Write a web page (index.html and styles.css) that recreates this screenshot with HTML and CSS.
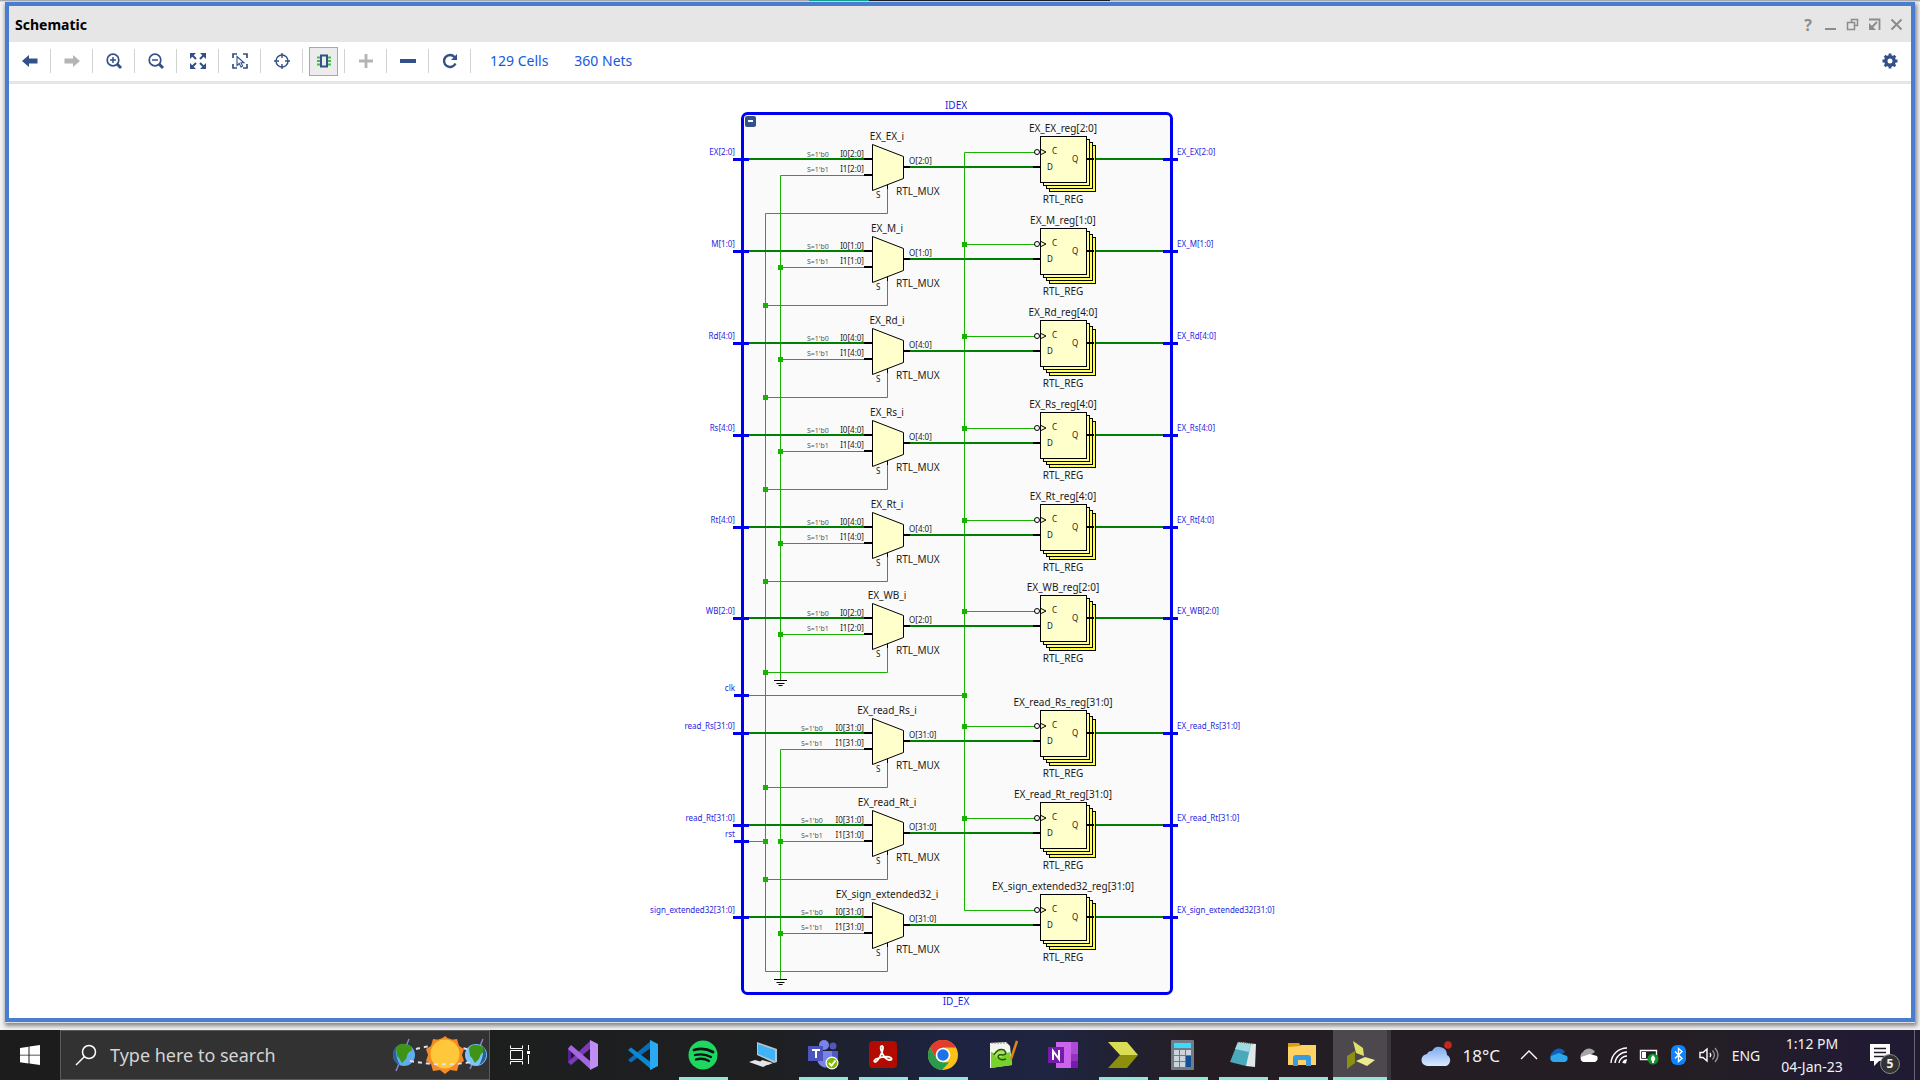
FILE: index.html
```html
<!DOCTYPE html>
<html lang="en">
<head>
<meta charset="utf-8">
<title>Schematic</title>
<link rel="stylesheet" href="styles.css">
</head>
<body>
<div class="edge"><span class="edge-teal"></span><span class="edge-dark"></span></div>

<main class="window">
  <header class="titlebar">
    <h1 class="title">Schematic</h1>
    <div class="controls">
      <button class="control" aria-label="Help">?</button>
      <button class="control" aria-label="Minimize"><svg width="13" height="13"><path d="M1 11h11" stroke-width="2"/></svg></button>
      <button class="control" aria-label="Restore"><svg width="13" height="13"><path d="M5.500 4V1.500h6v6H9M1.500 4.500h7v7h-7z" stroke-width="1.500"/></svg></button>
      <button class="control" aria-label="Float"><svg width="13" height="13"><path d="M1 1.500h10.500V12M9 4L4 9" stroke-width="1.800"/><path d="M1 5v7h7z" class="fill"/></svg></button>
      <button class="control" aria-label="Close"><svg width="13" height="13"><path d="M1.500 1.500l10 10M11.500 1.500l-10 10" stroke-width="2"/></svg></button>
    </div>
  </header>

  <nav class="toolbar">
    <button class="tool" aria-label="Previous"><svg width="20" height="20"><path class="fill" d="M2 10l7-6v3.500h8.500v5H9V16z"/></svg></button>
    <button class="tool off" aria-label="Next"><svg width="20" height="20"><path class="fill" d="M18 10l-7-6v3.500H2.500v5H11V16z"/></svg></button>
    <button class="tool" aria-label="Zoom in"><svg width="20" height="20"><circle cx="9" cy="9" r="5.800" stroke-width="1.700"/><path d="M6 9h6M9 6v6" stroke-width="1.500"/><path d="M13 13l4 4" stroke-width="3"/></svg></button>
    <button class="tool" aria-label="Zoom out"><svg width="20" height="20"><circle cx="9" cy="9" r="5.800" stroke-width="1.700"/><path d="M6 9h6" stroke-width="1.500"/><path d="M13 13l4 4" stroke-width="3"/></svg></button>
    <button class="tool" aria-label="Zoom fit"><svg width="20" height="20"><path class="fill" d="M2 2h6L2 8zM18 2v6l-6-6zM2 18v-6l6 6zM18 18h-6l6-6z"/><path d="M4 4l4 4M16 4l-4 4M4 16l4-4M16 16l-4-4" stroke-width="2"/></svg></button>
    <button class="tool" aria-label="Select area"><svg width="20" height="20"><path d="M3 7V3h4M13 3h4v4M3 13v4h4M17 13v4h-4" stroke-width="1.700"/><path d="M7 5.500v9l2.200-2 1.800 3.500 1.700-1-1.700-3.200h3z" stroke-width="1.100"/></svg></button>
    <button class="tool" aria-label="Auto-fit selection"><svg width="20" height="20"><circle cx="10" cy="10" r="6" stroke-width="1.400"/><path d="M10 2v5M10 13v5M2 10h5M13 10h5" stroke-width="1.400"/></svg></button>
    <button class="tool" aria-label="Cell pins" aria-pressed="true"><span class="pressed"><svg width="20" height="20"><path d="M3 6.500h14M3 10h14M3 13.500h14" class="pins"/><path d="M7 4.500h6v11H7z" class="cell"/></svg></span></button>
    <button class="tool off" aria-label="Expand"><svg width="20" height="20"><path d="M10 3v14M3 10h14" stroke-width="2.800"/></svg></button>
    <button class="tool" aria-label="Collapse"><svg width="20" height="20"><path class="fill" d="M2 8h16v4H2z"/></svg></button>
    <button class="tool" aria-label="Reload"><svg width="20" height="20"><path d="M15.500 12.500a6 6 0 1 1-1-6.500" stroke-width="2.400"/><path class="fill" d="M17 3v6h-6z"/></svg></button>
    <a class="stat" href="#cells">129 Cells</a>
    <a class="stat" href="#nets">360 Nets</a>
    <button class="settings" aria-label="Settings"><svg width="18" height="18"><circle cx="9" cy="9" r="4.200" stroke-width="3.400"/><path stroke-width="2.800" d="M9 1.500v3M9 13.500v3M1.500 9h3M13.500 9h3M3.700 3.700l2 2M12.300 12.300l2 2M3.700 14.300l2-2M12.300 5.700l2-2"/></svg></button>
  </nav>

  <section class="canvas">
    <svg id="schematic" class="schematic" viewBox="600 84 720 934" width="720" height="934">
      <defs>
        <g id="cell-row">
          <path class="bus" d="M749 159H865M910 167H1033M1094 159H1164"/>
          <path class="net" d="M780.500 175.500H865M887.500 188V213.500H765.500M964.500 152.500H1035"/>
          <path class="pin" d="M864 159h8M864 175h8M904 167h6M1033 167h7"/>
          <path class="lead" d="M887.500 184v5"/>
          <path class="part" d="M872.500 144.500L903.500 156.500V178.500L872.500 190.500z"/>
          <path class="port" d="M733 159.500h16M1163 159.500h15"/>
          <rect class="part s4" x="1049.500" y="145.500" width="46" height="46"/>
          <rect class="part s3" x="1046.500" y="142.500" width="46" height="46"/>
          <rect class="part s2" x="1043.500" y="139.500" width="46" height="46"/>
          <rect class="part" x="1040.500" y="136.500" width="46" height="46"/>
          <path class="pin" d="M1087 159h7"/>
          <circle class="lead" cx="1037" cy="152" r="2.500"/>
          <path class="lead" d="M1041 149.500l5 2.500-5 2.500"/>
        </g>
        <path id="ground" class="lead" d="M-6.500 0H6.500M-4 3H4M-2 5H2"/>
      </defs>
      <rect class="module" x="742.500" y="113.500" width="429" height="880" rx="5"/>
      <rect class="toggle" x="745" y="116" width="11" height="11" rx="2"/>
      <path class="toggle-mark" d="M748 121h5"/>
      <text class="blue mid" x="956" y="109">IDEX</text>
      <text class="blue mid" x="956" y="1005">ID_EX</text>
    </svg>
  </section>
</main>

<footer class="taskbar">
  <button class="start" aria-label="Start"><svg width="20" height="20"><path fill="#fff" d="M0 3l8.500-1.300v8H0zM9.500 1.500L20 0v9.700H9.500zM0 10.500h8.500v8L0 17.200zM9.500 10.500H20V20L9.500 18.600z"/></svg></button>
  <label class="search">
    <svg width="22" height="22"><g fill="none" stroke="#fff" stroke-width="1.500"><circle cx="14" cy="8" r="6.500"/><path d="M9.500 12.500L1 21"/></g></svg>
    <input class="search-box" type="text" placeholder="Type here to search" aria-label="Search">
    <svg class="doodle" width="96" height="40" viewBox="0 0 96 40">
      <path d="M17 4L4 36M91 4L78 34" stroke="#8b83c4" stroke-width="1.500"/>
      <path d="M24 14Q50 7 78 15" class="orbit"/>
      <g fill="#f78a22"><circle cx="53" cy="19" r="16"/><path d="M53 1l5 4 7-1 2 7 5 3-2 6 2 6-5 3-2 7-7-1-5 4-5-4-7 1-2-7-5-3 2-6-2-6 5-3 2-7 7 1z"/></g>
      <circle cx="53" cy="19" r="14.500" fill="#ffc83b"/>
      <circle cx="12" cy="20" r="11" fill="#5eaef0"/><path d="M4 13q3-5 9-4l6 2 1 4-4 3-2 6-4 4-3-5-2-2z" fill="#3f9315"/><path d="M4 12a11 11 0 0 0 4 18q-5-8-4-18z" fill="#2b6096"/>
      <circle cx="84" cy="20" r="11" fill="#7cc4fb"/><path d="M77 13q3-4 9-3l6 2 1 4-4 3-2 5-4 4-3-5-2-2z" fill="#3f9315"/><path d="M91 12a11 11 0 0 1-4 18q5-8 4-18z" fill="#2b6096"/>
      <path d="M18 26Q50 32 80 27" class="orbit"/>
    </svg>
  </label>
  <button class="view" aria-label="Task view"><svg width="20" height="20"><path fill="none" stroke="#fff" d="M.5.500V3.500h12V.500M.500 5.500h12v9H.500zM.500 19.500v-3h12v3M18.500 0v5M18.500 10v9"/><path fill="#fff" d="M17 6h3v3h-3z"/></svg></button>
  <nav class="apps">
    <button class="app" aria-label="Visual Studio"><svg width="30" height="30"><path fill="#55208f" d="M0 8l3-3v20l-3-3z"/><path fill="#7a3bb8" d="M0 22l3 3 20-17V0z"/><path fill="#a566e2" d="M3 5l19 16v8L0 9z"/><path fill="#c08df5" d="M22 0l8 4v22l-8 4z"/></svg></button>
    <button class="app" aria-label="Visual Studio Code"><svg width="30" height="30"><path fill="#0b6cb5" d="M0 20l3 2.500L24 7V0z"/><path fill="#0a88d2" d="M0 10l3-2.500L24 23v7z"/><path fill="#2aaaf4" d="M22 0l8 4v22l-8 4z"/></svg></button>
    <button class="app open" aria-label="Spotify"><svg width="30" height="30"><circle cx="15" cy="15" r="14.500" fill="#1ed760"/><path fill="none" stroke="#111" stroke-linecap="round" stroke-width="2.800" d="M6 10q10-3 19 2"/><path fill="none" stroke="#111" stroke-linecap="round" stroke-width="2.300" d="M7 15q9-2 16 2M8 19.500q7-2 13 1.500"/></svg></button>
    <button class="app" aria-label="Remote desktop"><svg width="30" height="30"><path fill="#b9c4cc" d="M9 2l20 7v13l-3 1L9 15z"/><path fill="#3fb2f8" d="M10 4l17 6v11L10 14z"/><path fill="#e2e6e9" d="M14 20l11 3-5 2-8-3zM1 22l6-2 14 4-6 3z"/></svg></button>
    <button class="app open" aria-label="Teams"><svg width="32" height="32"><circle cx="17" cy="6" r="5" fill="#7b83eb"/><circle cx="26" cy="7" r="3.500" fill="#4f58bd"/><path fill="#5059c9" d="M20 12h11v9q-2 6-9 5z"/><path fill="#7b83eb" d="M10 12h15v12q-3 6-9 4-5-2-6-8z"/><path fill="#4b53bc" d="M1 7h15v15H1z"/><path stroke="#fff" stroke-width="2" d="M5 11h8M9 11v8"/><circle cx="25" cy="24" r="6.500" fill="#fff"/><circle cx="25" cy="24" r="5.300" fill="#7fba00"/><path fill="none" stroke="#fff" stroke-width="2" d="M22 24l2.500 2.500 4-5"/></svg></button>
    <button class="app open" aria-label="Acrobat"><svg width="30" height="30"><rect x="1" y="1" width="28" height="27" rx="4" fill="#b30b00"/><path fill="none" stroke="#fff" stroke-width="1.800" d="M14 6q-2 0-1 4 3 9 8 10 4 0 2-2-4-3-15 1-3 2-1 3 3 0 7-10 2-6 0-6z"/></svg></button>
    <button class="app open" aria-label="Chrome"><svg width="30" height="30"><circle cx="15" cy="15" r="15" fill="#fbc116"/><path fill="#e33b2e" d="M2 7.500A15 15 0 0 1 28 7.500H15L8.500 18.800z"/><path fill="#2a9b48" d="M2 7.500L8.500 18.800 15 22.500h6L14 30A15 15 0 0 1 2 7.500z"/><circle cx="15" cy="15" r="7.300" fill="#fff"/><circle cx="15" cy="15" r="5.700" fill="#1a73e8"/></svg></button>
    <button class="app" aria-label="Notepad++"><svg width="30" height="30"><path fill="#f3f5ee" d="M2 3l16-1 4 4 2 19-22 3z"/><path fill="#79d12e" d="M3 12q8 4 19 0l2 13-21 3z"/><path fill="#a6e35a" d="M6 14q3-6 9-5 5 3 2 6l-5 3q-5 0-6-4z"/><path fill="none" stroke="#25580c" stroke-width="1.500" d="M6 15q4-7 10-5 4 4-1 5-5-1-5 2 2 4 8 2"/><path stroke="#888" stroke-dasharray="2 1" d="M3 3h16"/><path stroke="#d98a13" stroke-width="2.500" d="M29 1l-6 18"/></svg></button>
    <button class="app" aria-label="OneNote"><svg width="30" height="30"><path fill="#ca64ea" d="M8 2h15v26H8z"/><path fill="#ae4bd5" d="M23 2h7v12h-7z"/><path fill="#9332bf" d="M23 14h7v7h-7z"/><path fill="#7719aa" d="M23 21h7v7h-7zM0 7h16v16H0z"/><path fill="none" stroke="#fff" stroke-width="2" d="M5 20v-9l6 8v-9"/></svg></button>
    <button class="app open" aria-label="Vivado HLS"><svg width="30" height="30"><path fill="#d9dc55" d="M0 2h19l11 13H12z"/><path fill="#8c8f0b" d="M12 15h18L19 28H0z"/></svg></button>
    <button class="app open" aria-label="Calculator"><svg width="30" height="30"><rect x="3" width="23" height="30" rx="1" fill="#6f7b86"/><path fill="#3bdcfb" d="M6 3h17v5H6z"/><path fill="#cdd5dc" d="M6 10h5v5H6zM12 10h5v5h-5zM18 10h5v5h-5zM6 16h5v5H6zM12 16h5v5h-5zM6 22h5v5H6zM12 22h5v5h-5z"/><path fill="#124f94" d="M18 16h5v11h-5z"/></svg></button>
    <button class="app open" aria-label="Notepad"><svg width="30" height="30"><path fill="#dfe8e8" d="M12 2l16 2-1 23-9-1z"/><path fill="#4aa9bb" d="M10 2l13 2-5 22-16-4z"/><path fill="#9fd9e2" d="M10 2l13 2-2 8-14-3z"/><path stroke="#555" stroke-dasharray="1 1" d="M10 2l16 2"/></svg></button>
    <button class="app open" aria-label="File Explorer"><svg width="30" height="30"><path fill="#e09b0f" d="M0 3h11l2 3v6H0z"/><path fill="#ffd264" d="M0 7l12-1 1-1h15v20H0z"/><path fill="#3b9be0" d="M5 26V18q0-3 3-3h12q3 0 3 3v8h-5v-6h-8v6z"/></svg></button>
    <button class="app open active" aria-label="Vivado"><svg width="30" height="30"><path fill="#dfe06a" d="M8 1l10 7 1 8-8-3z"/><path fill="#8c8f12" d="M2 16l8-5v12l-8 6z"/><path fill="#eceb91" d="M11 21l9-4 10 3-8 6z"/></svg></button>
  </nav>

  <div class="tray">
    <button class="weather"><svg width="32" height="28"><defs><linearGradient id="sky" x2="0" y2="1"><stop stop-color="#7fa9ee"/><stop offset="1" stop-color="#dbe9ff"/></linearGradient></defs><path fill="url(#sky)" d="M7 25a6 6 0 0 1-1-12 5 5 0 0 1 5-3 8 8 0 0 1 15 4 6 6 0 0 1-1 11z"/><circle cx="27" cy="4" r="3.800" fill="#c8261b"/></svg><span>18°C</span></button>
    <button class="tray-icon" aria-label="Show hidden icons"><svg width="20" height="20"><path class="line" d="M2 14l8-8 8 8"/></svg></button>
    <button class="tray-icon" aria-label="OneDrive"><svg width="22" height="20"><path fill="#0f62b8" d="M4 15a5 5 0 0 1 1-8 7 7 0 0 1 12 0z"/><path fill="#2ea6ee" d="M5 17a4 4 0 0 1-2-6l8-3 8 3a4 4 0 0 1-2 6z"/></svg></button>
    <button class="tray-icon" aria-label="OneDrive personal"><svg width="22" height="20"><path fill="#a6a6a6" d="M4 15a5 5 0 0 1 1-8 7 7 0 0 1 12 0z"/><path fill="#fff" d="M5 17a4 4 0 0 1-2-5l9-3 7 2a4 4 0 0 1-2 6z"/></svg></button>
    <button class="tray-icon" aria-label="Network"><svg width="20" height="20"><path class="line" d="M2 18A16 16 0 0 1 18 3M6 18A12 12 0 0 1 18 7M10 18a8 8 0 0 1 8-7M14 18a4 4 0 0 1 4-3"/><circle cx="16" cy="17" r="1.500" fill="#fff"/></svg></button>
    <button class="tray-icon" aria-label="Battery"><svg width="20" height="20"><path class="line" d="M1.500 5.500h16v9h-16z"/><path fill="#fff" d="M3 7h4v6H3z"/><circle cx="14" cy="14" r="5.500" fill="#10932a"/><path fill="#fff" d="M14 10q4 4 1 6v2h-2v-2q-3-2 1-6z"/></svg></button>
    <button class="tray-icon" aria-label="Bluetooth"><svg width="20" height="20"><rect x="2" width="15" height="20" rx="6" fill="#0a84ff"/><path class="line" d="M6 6.500l7 7-3.500 3V3.500l3.500 3-7 7"/></svg></button>
    <button class="tray-icon" aria-label="Volume"><svg width="20" height="20"><path class="line" d="M1 7.500h3L8 4v12l-4-3.500H1z"/><path class="line" d="M11 8q1.500 2 0 4"/><path class="line" opacity=".5" d="M13.500 5.500q4 4.500 0 9M16 3q6 7 0 14"/></svg></button>
    <button class="lang">ENG</button>
    <button class="clock"><time>1:12 PM</time><time>04-Jan-23</time></button>
    <button class="notes" aria-label="Notifications"><svg width="21" height="22"><path fill="#fff" d="M0 0h20v17H9l-5 5v-5H0z"/><path stroke="#221a28" stroke-width="1.500" d="M4 4.500h12M4 8.500h12M4 12.500h12"/></svg><span class="badge">5</span></button>
    <button class="desktop" aria-label="Show desktop"></button>
  </div>
</footer>
<script src="script.js"></script>
</body>
</html>
```
FILE: styles.css
```css
* { box-sizing: border-box; }
body {
  margin: 0;
  min-height: 100vh;
  display: flex;
  flex-direction: column;
  background: #f2f2f2;
  font-family: "Noto Sans", "Open Sans", sans-serif;
  color: #000;
}
button {
  margin: 0;
  padding: 0;
  border: 0;
  background: none;
  font: inherit;
  color: inherit;
}
svg { display: block; }

.edge {
  display: flex;
  height: 2px;
  padding-left: 809px;
  border-bottom: 1px solid #d8d8d8;
  background: #a9a9ab;
}
.edge-teal { width: 60px; background: #0aa58f; }
.edge-dark { width: 241px; background: #16161c; }

/* Schematic window */
.window {
  flex: 1;
  display: flex;
  flex-direction: column;
  margin: 0 5px 8px;
  border: 4px solid #4a7dcf;
  background: #fff;
  box-shadow: 0 1px 0 #ddd, 1px 3px 4px 1px #888;
}
.titlebar {
  display: flex;
  align-items: center;
  justify-content: space-between;
  height: 36px;
  padding: 1px 4px 0 6px;
  background: #e6e6e6;
}
.title { margin: 0; font-size: 14px; line-height: 20px; }
.controls { display: flex; }
.control {
  display: grid;
  place-items: center;
  width: 22px;
  height: 22px;
  font-size: 16px;
  line-height: 22px;
  font-weight: 700;
  color: #8c8c8c;
}
.control svg { fill: none; stroke: #8c8c8c; }
.control .fill { fill: #8c8c8c; stroke: none; }

.toolbar {
  display: flex;
  align-items: center;
  height: 42px;
  padding-bottom: 1px;
  border-bottom: 3px solid #e6e6e6;
}
.tool {
  display: grid;
  place-content: center;
  width: 42px;
  height: 24px;
  border-right: 1px solid #d2d2d2;
}
.tool svg, .settings svg { fill: none; stroke: #335088; }
.tool .fill { fill: #335088; stroke: none; }
.tool.off svg { stroke: #b4b4b4; }
.tool.off .fill { fill: #b4b4b4; }
.pressed {
  display: grid;
  place-items: center;
  width: 29px;
  height: 29px;
  border: 1px solid #a8a8a8;
  background: #ececec;
}
.pressed .pins { stroke: #3fbf3f; stroke-width: 2; }
.pressed .cell { fill: #ececec; stroke-width: 2; }
.stat {
  margin-left: 19px;
  font-size: 14px;
  line-height: 20px;
  color: #1259e0;
  text-decoration: none;
}
.stat + .stat { margin-left: 26px; }
.settings { margin: 0 12px 0 auto; }

.canvas {
  flex: 1;
  display: flex;
  justify-content: center;
}

/* Schematic drawing */
.schematic { font-size: 10px; }
.schematic text { fill: #1a1a1a; }
.schematic .mid { text-anchor: middle; }
.schematic .end { text-anchor: end; }
.schematic .small { font-size: 8px; }
.schematic .tiny { font-size: 7px; fill: #555; }
.schematic .blue { fill: #1f1fe0; }
.module { fill: #fafafa; stroke: #0000f0; stroke-width: 3; }
.toggle { fill: #335088; }
.toggle-mark { stroke: #fff; stroke-width: 2; }
.bus { fill: none; stroke: #008000; stroke-width: 2; }
.net { fill: none; stroke: #17b300; }
.dot { fill: #17b300; }
.pin { stroke: #000; stroke-width: 2; }
.port { stroke: #0000f0; stroke-width: 3; }
.lead { fill: none; stroke: #000; }
.part { fill: #ffffcc; stroke: #000; }
.s2 { fill: #ffff99; }
.s3 { fill: #ffff66; }
.s4 { fill: #ffff33; }

/* Taskbar */
.taskbar {
  display: flex;
  height: 50px;
  background: linear-gradient(90deg, #1c1c1c 0, #1e1f20 40%, #1d2340 49%, #1f2440 55%, #241e24 62%, #241e24 88%, #211a33 97%);
  color: #f2f2f2;
}
.start, .view {
  display: grid;
  place-items: center;
  width: 60px;
}
.view { margin-right: 3px; }
.search {
  display: flex;
  align-items: center;
  width: 430px;
  padding: 0 1px 0 14px;
  border: 1px solid #5a5a5a;
  background: #323232;
}
.search-box {
  flex: 1;
  min-width: 0;
  margin-left: 13px;
  padding: 0;
  border: 0;
  background: none;
  font: 18px/24px "Noto Sans", "Open Sans", sans-serif;
}
.search-box::placeholder { color: #d4d4d4; opacity: 1; }
.orbit { fill: none; stroke: #e4def5; stroke-width: 2; stroke-dasharray: 4 4; }
.apps { display: flex; }
.app {
  display: grid;
  place-items: center;
  position: relative;
  width: 60px;
}
.app.open::after {
  content: "";
  position: absolute;
  left: 6px;
  right: 5px;
  bottom: 0;
  height: 3px;
  background: #90e6d8;
}
.app.active {
  width: 58px;
  border-right: 4px solid #3b363b;
  background: #4d484d;
}
.app.active::after { left: 0; right: 0; }
.tray { display: flex; margin-left: auto; }
.weather {
  display: flex;
  align-items: center;
  gap: 10px;
  margin-right: 14px;
  font-size: 17px;
}
.tray-icon {
  display: grid;
  place-items: center;
  width: 30px;
}
.line { fill: none; stroke: #fff; stroke-width: 1.4; }
.lang { width: 44px; font-size: 14px; }
.clock {
  display: grid;
  align-content: center;
  justify-items: center;
  width: 88px;
  font-size: 14px;
  line-height: 23px;
}
.notes {
  display: grid;
  place-items: center;
  position: relative;
  width: 48px;
  margin-right: 10px;
}
.badge {
  position: absolute;
  left: 24px;
  top: 24px;
  width: 20px;
  height: 20px;
  border: 1px solid #8a8a8a;
  border-radius: 50%;
  background: #333;
  font-size: 12px;
  line-height: 18px;
  font-weight: 700;
}
.desktop { width: 6px; border-left: 1px solid #6a6670; }
```
FILE: script.js
```js
// Each register stage: vertical offset, input port, output port, bus range.
const rows = [
  [0, "EX", "EX_EX", "2:0"],
  [92, "M", "EX_M", "1:0"],
  [184, "Rd", "EX_Rd", "4:0"],
  [276, "Rs", "EX_Rs", "4:0"],
  [368, "Rt", "EX_Rt", "4:0"],
  [459, "WB", "EX_WB", "2:0"],
  [574, "read_Rs", "EX_read_Rs", "31:0"],
  [666, "read_Rt", "EX_read_Rt", "31:0"],
  [758, "sign_extended32", "EX_sign_extended32", "31:0"],
];

const text = (cls, x, y, value) => `<text class="${cls}" x="${x}" y="${y}">${value}</text>`;
const dot = (x, y) => `<rect class="dot" x="${x - 2.5}" y="${y - 2.5}" width="5" height="5"/>`;

let out = `
  <path class="net" d="M765.500 213.500V971.500M780.500 175.500V680M780.500 749.500V979M964.500 152.500V910.500M749 695.500H964M749 841.500H765"/>
  <use href="#ground" x="780.500" y="680.500"/>
  <use href="#ground" x="780.500" y="979.500"/>
  <path class="port" d="M734 695.500h15M734 841.500h15"/>
  ${text("blue small end", 735, 691, "clk")}
  ${text("blue small end", 735, 837, "rst")}
  ${dot(964.5, 695.5)}${dot(765.5, 841.5)}`;

rows.forEach(([dy, input, output, range], i) => {
  const bus = `[${range}]`;
  const selectX = range === "31:0" ? 801 : 807;
  out += `<use href="#cell-row" y="${dy}"/>`
    + text("blue small end", 735, 155 + dy, input + bus)
    + text("blue small", 1177, 155 + dy, output + bus)
    + text("mid", 887, 140 + dy, output + "_i")
    + text("", 896, 195 + dy, "RTL_MUX")
    + text("tiny", selectX, 157 + dy, "S=1'b0")
    + text("tiny", selectX, 172 + dy, "S=1'b1")
    + text("small end", 864, 157 + dy, "I0" + bus)
    + text("small end", 864, 172 + dy, "I1" + bus)
    + text("small", 909, 164 + dy, "O" + bus)
    + text("small", 876, 198 + dy, "S")
    + text("mid", 1063, 132 + dy, output + "_reg" + bus)
    + text("mid", 1063, 203 + dy, "RTL_REG")
    + text("small", 1052, 154 + dy, "C")
    + text("small", 1047, 170 + dy, "D")
    + text("small", 1072, 162 + dy, "Q");
  const last = i === rows.length - 1;
  if (i > 0 && !last) out += dot(765.5, 213.5 + dy) + dot(964.5, 152.5 + dy);
  if (i > 0 && i !== 6) out += dot(780.5, 175.5 + dy);
});

document.getElementById("schematic").insertAdjacentHTML("beforeend", out);
```
